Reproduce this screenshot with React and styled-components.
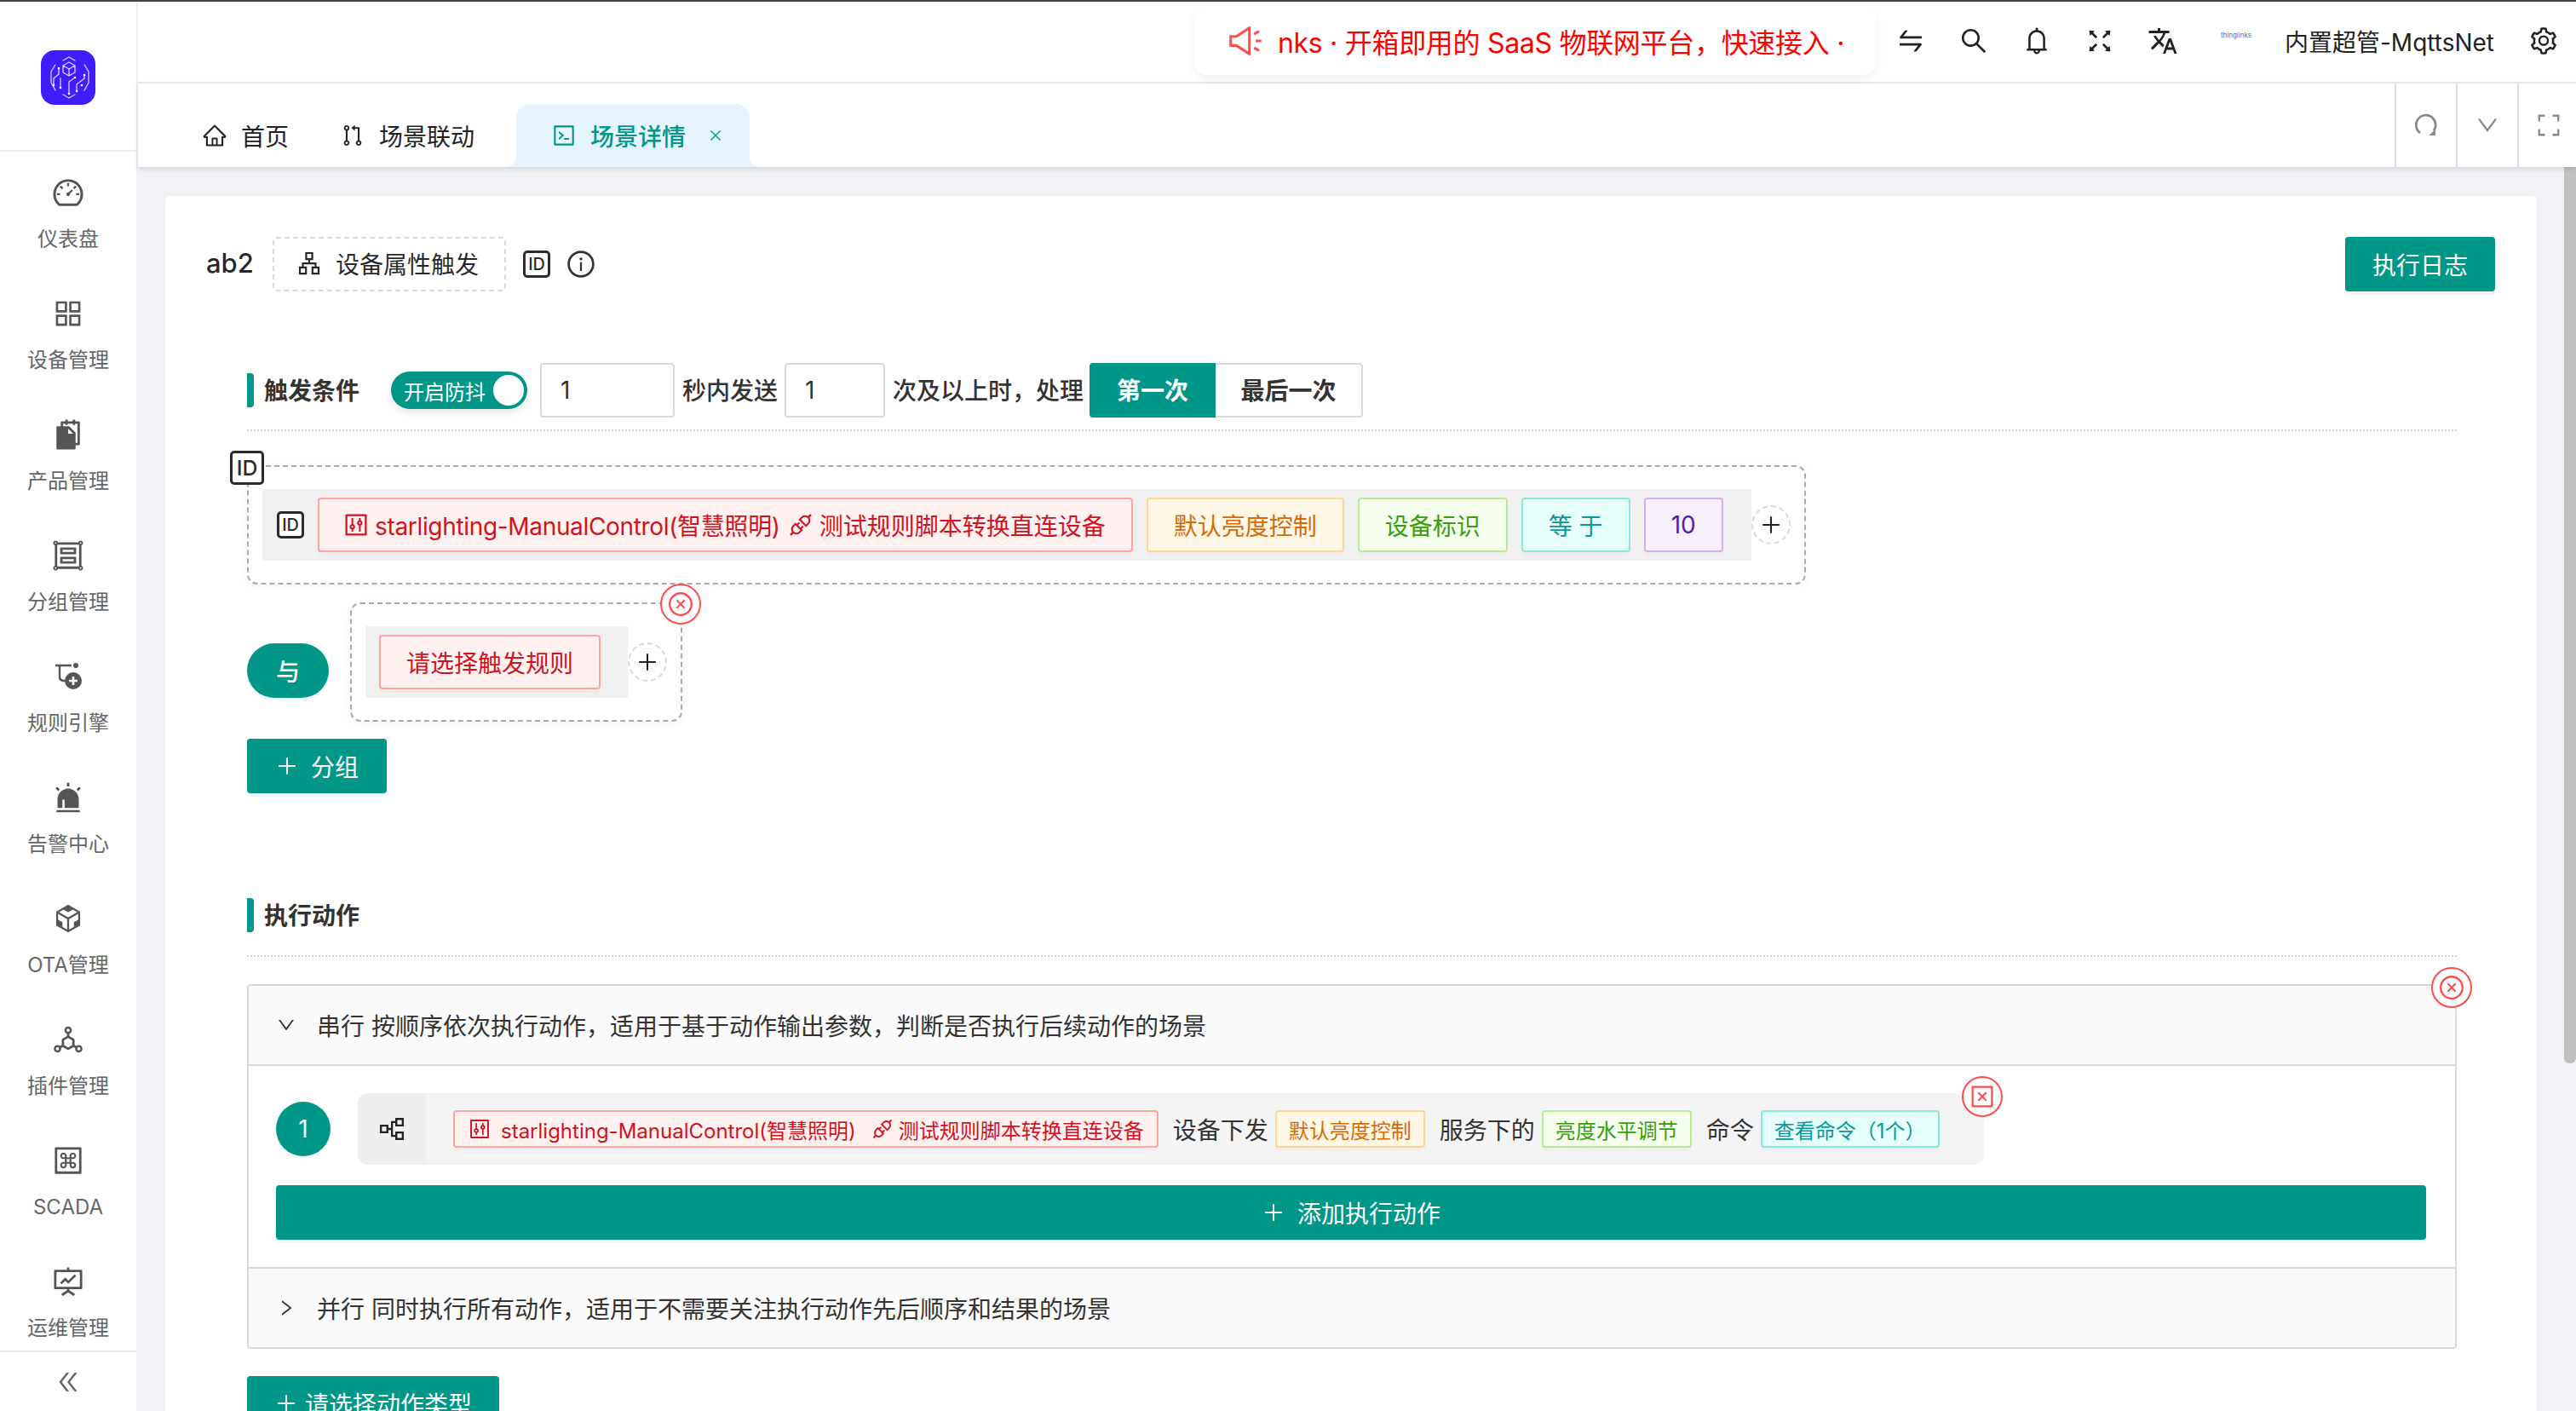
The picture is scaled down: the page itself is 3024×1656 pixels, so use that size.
import styled, { createGlobalStyle } from "styled-components";
import {
  AiOutlineDashboard,
  AiOutlineAppstore,
  AiFillSnippets,
  AiOutlineGroup,
  AiFillAlert,
  AiOutlineCodeSandbox,
  AiOutlineDeploymentUnit,
  AiOutlineMacCommand,
  AiOutlineFundProjectionScreen,
  AiOutlineDoubleLeft,
  AiOutlineSound,
  AiOutlineSwap,
  AiOutlineSearch,
  AiOutlineBell,
  AiOutlineFullscreen,
  AiOutlineSetting,
  AiOutlineHome,
  AiOutlinePullRequest,
  AiOutlineCode,
  AiOutlineClose,
  AiOutlineDown,
  AiOutlineRight,
  AiOutlineExpand,
  AiOutlineApartment,
  AiOutlineInfoCircle,
  AiOutlineControl,
  AiOutlineApi,
  AiOutlinePlus,
  AiOutlineCloseCircle,
  AiOutlineCloseSquare,
  AiOutlinePartition,
} from "react-icons/ai";
import { MdTranslate } from "react-icons/md";

const PRIMARY = "#009688";
const FONT = '"Inter", "Noto Sans CJK SC", sans-serif';

const tagColors = {
  red: { bg: "#fff1f0", line: "#ffa39e", text: "#cf1322" },
  orange: { bg: "#fff7e6", line: "#ffd591", text: "#d46b08" },
  green: { bg: "#f6ffed", line: "#b7eb8f", text: "#389e0d" },
  cyan: { bg: "#e6fffb", line: "#87e8de", text: "#08979c" },
  purple: { bg: "#f9f0ff", line: "#d3adf7", text: "#531dab" },
};

const GlobalStyle = createGlobalStyle`
  html, body {
    margin: 0;
    padding: 0;
    background: #fff;
    font-family: ${FONT};
    overflow: hidden;
  }
  * { box-sizing: border-box; }
`;

const Page = styled.div`
  display: flex;
  flex-direction: column;
  width: 3024px;
  height: 1656px;
  overflow: hidden;
  color: rgba(0, 0, 0, 0.85);
  font-size: 28px;
`;

const TopLine = styled.div`
  height: 2px;
  flex: none;
  background: #444;
`;

const Shell = styled.div`
  display: flex;
  flex: 1;
  min-height: 0;
`;

const Sidebar = styled.aside`
  display: flex;
  flex-direction: column;
  width: 162px;
  flex: none;
  border-right: 2px solid #f0f0f0;
`;

const LogoArea = styled.div`
  display: flex;
  align-items: center;
  justify-content: center;
  height: 176px;
  flex: none;
  padding-top: 4px;
  border-bottom: 2px solid #ececec;
`;

const Menu = styled.nav`
  flex: 1;
  min-height: 0;
  overflow: hidden;
  padding-top: 3px;
`;

const MenuItem = styled.div`
  display: flex;
  flex-direction: column;
  align-items: center;
  height: 142px;
  padding-top: 25px;
  color: #666;
  font-size: 24px;
  svg {
    font-size: 40px;
    color: #555;
  }
  span {
    margin-top: 19px;
    line-height: 32px;
  }
`;

const CollapseFoot = styled.div`
  display: flex;
  align-items: center;
  justify-content: center;
  height: 71px;
  flex: none;
  border-top: 2px solid #ececec;
  color: #666;
  font-size: 32px;
`;

const Main = styled.div`
  display: flex;
  flex-direction: column;
  flex: 1;
  min-width: 0;
`;

const Header = styled.header`
  display: flex;
  align-items: center;
  justify-content: flex-end;
  height: 96px;
  flex: none;
  padding: 0 20px 2px 0;
  border-bottom: 2px solid #ececec;
`;

const Notice = styled.div`
  display: flex;
  align-items: center;
  width: 800px;
  height: 80px;
  margin-right: 4px;
  padding-left: 38px;
  border-radius: 16px;
  background: #fff;
  box-shadow: 0 4px 12px rgba(0, 0, 0, 0.06);
  overflow: hidden;
  white-space: nowrap;
  color: #f00;
  font-size: 32px;
  letter-spacing: -0.3px;
  svg {
    flex: none;
    font-size: 44px;
    color: #ff4d4f;
    margin-right: 16px;
  }
`;

const HeadIcon = styled.div`
  display: flex;
  align-items: center;
  justify-content: center;
  width: 74px;
  font-size: 36px;
  color: #222;
`;

const GearIcon = styled(HeadIcon)`
  width: 36px;
`;

const Brand = styled.div`
  width: 74px;
  margin: -14px 0 0 12px;
  text-align: center;
  font-size: 8px;
  color: #3b6fd8;
`;

const UserName = styled.div`
  margin: 0 40px 0 20px;
  white-space: nowrap;
  color: #222;
`;

const TabBar = styled.div`
  display: flex;
  align-items: flex-end;
  height: 98px;
  flex: none;
  padding-left: 45px;
  box-shadow: 0 2px 6px rgba(0, 0, 0, 0.14);
  position: relative;
  z-index: 1;
`;

const Tab = styled.div`
  display: flex;
  align-items: center;
  height: 74px;
  padding: 0 30px;
  color: #222;
  svg {
    font-size: 30px;
    margin-right: 16px;
  }
`;

const ActiveTab = styled(Tab)`
  position: relative;
  width: 274px;
  margin-left: 19px;
  padding: 0 0 0 41px;
  border-radius: 16px 16px 0 0;
  background: #e6f4ff;
  color: ${PRIMARY};
  font-weight: 500;
  &::before,
  &::after {
    content: "";
    position: absolute;
    bottom: 0;
    width: 13px;
    height: 13px;
  }
  &::before {
    left: -13px;
    background: radial-gradient(circle at 0 0, transparent 13px, #e6f4ff 13.5px);
  }
  &::after {
    right: -13px;
    background: radial-gradient(circle at 100% 0, transparent 13px, #e6f4ff 13.5px);
  }
`;

const TabClose = styled.span`
  display: flex;
  margin-left: 26px;
  svg {
    font-size: 18px;
    margin: 0;
  }
`;

const TabTools = styled.div`
  display: flex;
  align-self: stretch;
  margin: 0 -3px 0 auto;
`;

const ToolBtn = styled.div`
  display: flex;
  align-items: center;
  justify-content: center;
  width: 72px;
  border-left: 2px solid #ddd;
  color: #888;
  font-size: 30px;
`;

const Content = styled.div`
  display: flex;
  flex: 1;
  min-height: 0;
  background: #f0f2f5;
`;

const ContentScroll = styled.main`
  flex: 1;
  min-width: 0;
  overflow: hidden;
  padding: 34px 32px 0 32px;
`;

const ScrollTrack = styled.div`
  width: 14px;
  flex: none;
  background: #f0f2f5;
`;

const ScrollThumb = styled.div`
  height: 1052px;
  border-radius: 0 0 6px 6px;
  background: #c1c1c1;
`;

const Card = styled.div`
  min-height: 1500px;
  padding: 48px 49px 0 48px;
  border-radius: 6px;
  background: #fff;
`;

const TitleRow = styled.div`
  display: flex;
  align-items: center;
`;

const SceneName = styled.div`
  width: 78px;
  padding-bottom: 3px;
  font-size: 31px;
  font-weight: 500;
`;

const TriggerTag = styled.div`
  display: flex;
  align-items: center;
  width: 274px;
  height: 64px;
  padding: 0 0 3px 26px;
  border: 2px dashed #d9d9d9;
  border-radius: 4px;
  svg {
    font-size: 30px;
    margin-right: 16px;
  }
`;

const IdMark = styled.span`
  display: inline-flex;
  align-items: center;
  justify-content: center;
  flex: none;
  width: ${(p) => p.$size || 32}px;
  height: ${(p) => p.$size || 32}px;
  margin-left: ${(p) => p.$ml || 0}px;
  border: 3px solid #2b2b2b;
  border-radius: 5px;
  background: #fff;
  color: #2b2b2b;
  font-size: ${(p) => (p.$size || 32) * 0.62}px;
  font-weight: 500;
`;

const InfoIcon = styled.span`
  display: flex;
  margin-left: 18px;
  font-size: 36px;
  color: #333;
`;

const LogButton = styled.button`
  height: 64px;
  width: 176px;
  margin-left: auto;
  border: none;
  border-radius: 4px;
  background: ${PRIMARY};
  box-shadow: 0 4px 0 rgba(0, 0, 0, 0.04);
  color: #fff;
  font: inherit;
`;

const Section = styled.section`
  margin: ${(p) => p.$top}px 45px 0 48px;
`;

const SectionHead = styled.div`
  display: flex;
  align-items: center;
  padding-bottom: ${(p) => p.$pb}px;
  border-bottom: 2px dotted #d0d0d0;
  font-weight: 500;
`;

const Marker = styled.i`
  width: 8px;
  height: 40px;
  margin-right: 12px;
  border-radius: 0 4px 4px 0;
  background: ${PRIMARY};
`;

const SectionTitle = styled.div`
  padding-bottom: 2px;
  color: #333;
  font-weight: 600;
`;

const Toggle = styled.div`
  display: flex;
  align-items: center;
  justify-content: space-between;
  width: 160px;
  height: 44px;
  margin: 0 15px 0 37px;
  padding: 0 4px 0 15px;
  border-radius: 22px;
  background: ${PRIMARY};
  box-shadow: 0 4px 8px rgba(0, 0, 0, 0.1);
  color: #fff;
  font-size: 24px;
  font-weight: 400;
  &::after {
    content: "";
    width: 36px;
    height: 36px;
    border-radius: 50%;
    background: #fff;
  }
`;

const NumberInput = styled.input`
  width: ${(p) => p.$w}px;
  height: 64px;
  padding: 0 22px;
  border: 2px solid #d9d9d9;
  border-radius: 4px;
  outline: none;
  color: #333;
  font: 400 28px ${FONT};
`;

const InlineText = styled.span`
  margin: 0 8px 0 9px;
  padding-bottom: 2px;
  color: #333;
  white-space: nowrap;
`;

const Segment = styled.div`
  display: flex;
  height: 64px;
  margin-left: -1px;
`;

const SegmentItem = styled.div`
  display: flex;
  align-items: center;
  justify-content: center;
  width: ${(p) => p.$w}px;
  padding-bottom: 2px;
  border: 2px solid ${(p) => (p.$on ? PRIMARY : "#d9d9d9")};
  border-left-width: ${(p) => (p.$on ? 2 : 0)}px;
  border-radius: ${(p) => (p.$on ? "4px 0 0 4px" : "0 4px 4px 0")};
  background: ${(p) => (p.$on ? PRIMARY : "#fff")};
  color: ${(p) => (p.$on ? "#fff" : "#333")};
  font-weight: 700;
`;

const RuleGroup = styled.div`
  position: relative;
  display: flex;
  align-items: center;
  width: fit-content;
  padding: 26px 16px 26px 16px;
  border: 2px dashed #aaa;
  border-radius: 12px;
  box-shadow: 0 2px 10px rgba(0, 0, 0, 0.05);
`;

const FirstGroup = styled(RuleGroup)`
  margin-top: 40px;
`;

const FloatId = styled.div`
  position: absolute;
  top: -19px;
  left: -22px;
  display: flex;
`;

const Strip = styled.div`
  display: flex;
  align-items: center;
  height: 84px;
  padding: 0 ${(p) => p.$pr}px 0 ${(p) => p.$pl}px;
  gap: 16px;
  background: #f0f0f0;
`;

const Tag = styled.div`
  display: flex;
  align-items: center;
  height: 64px;
  padding: 0 ${(p) => p.$px || 30}px;
  border: 2px solid ${(p) => tagColors[p.$tone].line};
  border-radius: 4px;
  background: ${(p) => tagColors[p.$tone].bg};
  box-shadow: 0 4px 0 rgba(0, 0, 0, 0.02);
  color: ${(p) => tagColors[p.$tone].text};
  white-space: nowrap;
  svg {
    flex: none;
    font-size: 32px;
  }
`;

const AddCircle = styled.div`
  display: flex;
  align-items: center;
  justify-content: center;
  width: 46px;
  height: 46px;
  border: 2px dashed #d9d9d9;
  border-radius: 50%;
  color: #222;
  font-size: 28px;
`;

const GroupRow = styled.div`
  display: flex;
  align-items: flex-start;
  margin-top: 21px;
`;

const AndBadge = styled.div`
  display: flex;
  align-items: center;
  justify-content: center;
  width: 96px;
  height: 64px;
  margin: 48px 25px 0 0;
  border-radius: 32px;
  background: ${PRIMARY};
  box-shadow: 0 4px 0 rgba(0, 0, 0, 0.03);
  color: #fff;
  font-weight: 500;
`;

const CloseRing = styled.div`
  position: absolute;
  top: ${(p) => p.$top}px;
  right: ${(p) => p.$right}px;
  display: flex;
  align-items: center;
  justify-content: center;
  width: 48px;
  height: 48px;
  border: 2px solid #ff4d4f;
  border-radius: 50%;
  background: #fff;
  color: #ff4d4f;
  font-size: 32px;
`;

const PrimaryButton = styled.button`
  display: flex;
  align-items: center;
  justify-content: center;
  gap: ${(p) => p.$gap || 14}px;
  width: ${(p) => p.$w || "auto"};
  height: 64px;
  margin-top: ${(p) => p.$mt || 0}px;
  padding: 0;
  border: none;
  border-radius: 4px;
  background: ${PRIMARY};
  box-shadow: 0 4px 0 rgba(0, 0, 0, 0.04);
  color: #fff;
  font: inherit;
  white-space: nowrap;
  svg {
    font-size: 28px;
  }
`;

const Collapse = styled.div`
  position: relative;
  margin-top: 32px;
  border: 2px solid #d9d9d9;
  border-radius: 4px;
`;

const CollapseHead = styled.div`
  display: flex;
  align-items: center;
  height: ${(p) => p.$h}px;
  padding-left: 32px;
  background: #fafafa;
  color: #333;
  svg {
    font-size: 24px;
    margin-right: 24px;
  }
`;

const CollapseBody = styled.div`
  padding: 32px 34px 32px 32px;
  border-top: 2px solid #d9d9d9;
  border-bottom: 2px solid #d9d9d9;
`;

const StepRow = styled.div`
  display: flex;
  align-items: center;
`;

const StepNo = styled.div`
  display: flex;
  align-items: center;
  justify-content: center;
  flex: none;
  width: 64px;
  height: 64px;
  margin-right: 32px;
  border-radius: 50%;
  background: ${PRIMARY};
  box-shadow: 0 4px 0 rgba(0, 0, 0, 0.03);
  color: #fff;
`;

const StepStrip = styled.div`
  position: relative;
  display: flex;
  align-items: center;
  height: 84px;
  padding-right: 52px;
  border-radius: 12px;
  background: #f4f4f4;
`;

const StepIcon = styled.div`
  display: flex;
  align-items: center;
  justify-content: center;
  align-self: stretch;
  width: 80px;
  margin-right: 32px;
  border-radius: 12px 0 0 12px;
  background: #efefef;
  color: #222;
  font-size: 36px;
`;

const StepTag = styled(Tag)`
  height: 44px;
  font-size: 24px;
  svg {
    font-size: 28px;
  }
`;

const StepText = styled.span`
  margin: 0 8px 0 17px;
  color: #333;
  white-space: nowrap;
`;

const ChipIcon = styled.span`
  display: flex;
  margin: ${(p) => p.$m};
`;

const DeviceName = styled.span`
  letter-spacing: ${(p) => p.$track || 0}px;
`;

// 规则引擎: no package icon has this exact T + plus-node shape
function RuleIcon() {
  return (
    <svg width="40" height="40" viewBox="0 0 40 40" fill="none">
      <path d="M5 7h19M10 7v13c0 3 2 5 5 5h2" stroke="#555" strokeWidth="2.4" />
      <circle cx="29" cy="7" r="3" fill="#555" />
      <circle cx="26" cy="25" r="10" fill="#555" />
      <path d="M21 25h10M26 20v10" stroke="#fff" strokeWidth="2.6" />
    </svg>
  );
}

// open ring with the arrow head at the bottom right
function ReloadIcon() {
  return (
    <svg width="30" height="30" viewBox="0 0 30 30" fill="none">
      <path d="M8 24A11.5 11.5 0 1 1 24 21.5" stroke="#888" strokeWidth="2.6" />
      <path d="M18.5 27h7.5v-7.5z" fill="#888" />
    </svg>
  );
}

const menuItems = [
  [AiOutlineDashboard, "仪表盘"],
  [AiOutlineAppstore, "设备管理"],
  [AiFillSnippets, "产品管理"],
  [AiOutlineGroup, "分组管理"],
  [RuleIcon, "规则引擎"],
  [AiFillAlert, "告警中心"],
  [AiOutlineCodeSandbox, "OTA管理"],
  [AiOutlineDeploymentUnit, "插件管理"],
  [AiOutlineMacCommand, "SCADA"],
  [AiOutlineFundProjectionScreen, "运维管理"],
];

function Logo() {
  return (
    <svg width="64" height="64" viewBox="0 0 64 64" fill="none">
      <rect width="64" height="64" rx="16" fill="#3f1dff" />
      <g stroke="#d8d3ff" strokeWidth="1.3" strokeLinecap="round" strokeLinejoin="round">
        <path d="M26 12l7-4 7 4M26 52l7 4 7-4" />
        <path d="M17 17l-5 8v13l5 9M51 17l5 8v13l-5 9" />
        <path d="M33 14l7 4v8l-7 4-7-4v-8zM26 18l7 4 7-4M33 22v8" />
        <path d="M21 21v7l-6 5v8M23 33v11M40 32l-7 5v14M51 29v4l-9 7v8" />
      </g>
      <g fill="#fff">
        <circle cx="21" cy="21" r="1.3" />
        <circle cx="15" cy="41" r="1.3" />
        <circle cx="23" cy="44" r="1.3" />
        <circle cx="40" cy="32" r="1.3" />
        <circle cx="33" cy="51" r="1.3" />
        <circle cx="51" cy="29" r="1.3" />
        <circle cx="42" cy="48" r="1.3" />
        <circle cx="48" cy="41" r="1.3" />
      </g>
    </svg>
  );
}

function DeviceText({ gaps, track }) {
  return (
    <>
      <ChipIcon $m={gaps[0]}><AiOutlineControl /></ChipIcon>
      <DeviceName $track={track}>starlighting-ManualControl(智慧照明)</DeviceName>
      <ChipIcon $m={gaps[1]}><AiOutlineApi /></ChipIcon>
      测试规则脚本转换直连设备
    </>
  );
}

function App() {
  return (
    <>
      <GlobalStyle />
      <Page>
        <TopLine />
        <Shell>
          <Sidebar>
            <LogoArea>
              <Logo />
            </LogoArea>
            <Menu>
              {menuItems.map(([Icon, label]) => (
                <MenuItem key={label}>
                  <Icon />
                  <span>{label}</span>
                </MenuItem>
              ))}
            </Menu>
            <CollapseFoot>
              <AiOutlineDoubleLeft />
            </CollapseFoot>
          </Sidebar>

          <Main>
            <Header>
              <Notice>
                <AiOutlineSound />
                nks · 开箱即用的 SaaS 物联网平台，快速接入 · 
              </Notice>
              <HeadIcon><AiOutlineSwap /></HeadIcon>
              <HeadIcon><AiOutlineSearch /></HeadIcon>
              <HeadIcon><AiOutlineBell /></HeadIcon>
              <HeadIcon><AiOutlineFullscreen /></HeadIcon>
              <HeadIcon><MdTranslate /></HeadIcon>
              <Brand>thinglinks</Brand>
              <UserName>内置超管-MqttsNet</UserName>
              <GearIcon><AiOutlineSetting /></GearIcon>
            </Header>

            <TabBar>
              <Tab><AiOutlineHome />首页</Tab>
              <Tab><AiOutlinePullRequest />场景联动</Tab>
              <ActiveTab>
                <AiOutlineCode />
                场景详情
                <TabClose><AiOutlineClose /></TabClose>
              </ActiveTab>
              <TabTools>
                <ToolBtn><ReloadIcon /></ToolBtn>
                <ToolBtn><AiOutlineDown /></ToolBtn>
                <ToolBtn><AiOutlineExpand /></ToolBtn>
              </TabTools>
            </TabBar>

            <Content>
              <ContentScroll>
                <Card>
                  <TitleRow>
                    <SceneName>ab2</SceneName>
                    <TriggerTag><AiOutlineApartment />设备属性触发</TriggerTag>
                    <IdMark $ml={20}>ID</IdMark>
                    <InfoIcon><AiOutlineInfoCircle /></InfoIcon>
                    <LogButton>执行日志</LogButton>
                  </TitleRow>

                  <Section $top={84}>
                    <SectionHead $pb={14}>
                      <Marker />
                      <SectionTitle>触发条件</SectionTitle>
                      <Toggle>开启防抖</Toggle>
                      <NumberInput $w={158} readOnly value="1" />
                      <InlineText>秒内发送</InlineText>
                      <NumberInput $w={118} readOnly value="1" />
                      <InlineText>次及以上时，处理</InlineText>
                      <Segment>
                        <SegmentItem $w={148} $on>第一次</SegmentItem>
                        <SegmentItem $w={173}>最后一次</SegmentItem>
                      </Segment>
                    </SectionHead>

                    <FirstGroup>
                      <FloatId><IdMark $size={40}>ID</IdMark></FloatId>
                      <Strip $pl={17} $pr={33}>
                        <IdMark>ID</IdMark>
                        <Tag $tone="red">
                          <DeviceText track={-0.33} gaps={["0 6px 0 -3px", "0 6px 0 8px"]} />
                        </Tag>
                        <Tag $tone="orange">默认亮度控制</Tag>
                        <Tag $tone="green">设备标识</Tag>
                        <Tag $tone="cyan">等 于</Tag>
                        <Tag $tone="purple">10</Tag>
                      </Strip>
                      <AddCircle><AiOutlinePlus /></AddCircle>
                    </FirstGroup>

                    <GroupRow>
                      <AndBadge>与</AndBadge>
                      <RuleGroup>
                        <CloseRing $top={-24} $right={-24}><AiOutlineCloseCircle /></CloseRing>
                        <Strip $pl={16} $pr={32}>
                          <Tag $tone="red">请选择触发规则</Tag>
                        </Strip>
                        <AddCircle><AiOutlinePlus /></AddCircle>
                      </RuleGroup>
                    </GroupRow>

                    <PrimaryButton $mt={20} $w="164px">
                      <AiOutlinePlus />分组
                    </PrimaryButton>
                  </Section>

                  <Section $top={122}>
                    <SectionHead $pb={26}>
                      <Marker />
                      <SectionTitle>执行动作</SectionTitle>
                    </SectionHead>

                    <Collapse>
                      <CloseRing $top={-22} $right={-20}><AiOutlineCloseCircle /></CloseRing>
                      <CollapseHead $h={92}>
                        <AiOutlineDown />
                        串行 按顺序依次执行动作，适用于基于动作输出参数，判断是否执行后续动作的场景
                      </CollapseHead>
                      <CollapseBody>
                        <StepRow>
                          <StepNo>1</StepNo>
                          <StepStrip>
                            <CloseRing $top={-20} $right={-22}><AiOutlineCloseSquare /></CloseRing>
                            <StepIcon><AiOutlinePartition /></StepIcon>
                            <StepTag $tone="red" $px={15}>
                              <DeviceText gaps={["0 11px 0 0", "0 5px 0 17px"]} />
                            </StepTag>
                            <StepText>设备下发</StepText>
                            <StepTag $tone="orange" $px={14}>默认亮度控制</StepTag>
                            <StepText>服务下的</StepText>
                            <StepTag $tone="green" $px={14}>亮度水平调节</StepTag>
                            <StepText>命令</StepText>
                            <StepTag $tone="cyan" $px={14}>查看命令（1个）</StepTag>
                          </StepStrip>
                        </StepRow>
                        <PrimaryButton $mt={24} $w="100%">
                          <AiOutlinePlus />添加执行动作
                        </PrimaryButton>
                      </CollapseBody>
                      <CollapseHead $h={92}>
                        <AiOutlineRight />
                        并行 同时执行所有动作，适用于不需要关注执行动作先后顺序和结果的场景
                      </CollapseHead>
                    </Collapse>

                    <PrimaryButton $mt={32} $w="296px" $gap={8}>
                      <AiOutlinePlus />请选择动作类型
                    </PrimaryButton>
                  </Section>
                </Card>
              </ContentScroll>
              <ScrollTrack><ScrollThumb /></ScrollTrack>
            </Content>
          </Main>
        </Shell>
      </Page>
    </>
  );
}

export default App;
